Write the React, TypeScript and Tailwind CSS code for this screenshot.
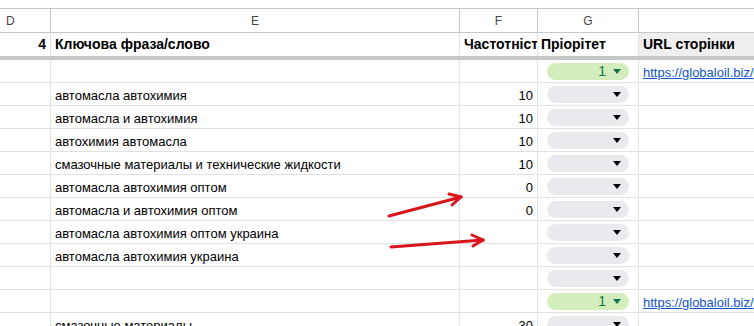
import React from "react";

type Row = { e?: string; f?: string; g?: "green" | "gray"; h?: string };

const rows: Row[] = [
  { g: "green", h: "https://globaloil.biz/" },
  { e: "автомасла автохимия", f: "10", g: "gray" },
  { e: "автомасла и автохимия", f: "10", g: "gray" },
  { e: "автохимия автомасла", f: "10", g: "gray" },
  { e: "смазочные материалы и технические жидкости", f: "10", g: "gray" },
  { e: "автомасла автохимия оптом", f: "0", g: "gray" },
  { e: "автомасла и автохимия оптом", f: "0", g: "gray" },
  { e: "автомасла автохимия оптом украина", g: "gray" },
  { e: "автомасла автохимия украина", g: "gray" },
  { g: "gray" },
  { g: "green", h: "https://globaloil.biz/" },
  { e: "смазочные материалы", f: "30", g: "gray" },
];

const cols = "grid grid-cols-[51px_409px_78px_101px_200px]";

function Chip({ kind }: { kind: "green" | "gray" }) {
  if (kind === "green") {
    return (
      <div className="ml-[9px] flex h-[17px] w-[82px] items-center justify-end rounded-[9px] bg-[#d4edbc] pr-[8px]">
        <span className="mr-[7px] text-[14px] leading-none text-[#11734b]">1</span>
        <svg width="8" height="5" viewBox="0 0 8 5">
          <path d="M0 0 L8 0 L4 5 Z" fill="#11734b" />
        </svg>
      </div>
    );
  }
  return (
    <div className="ml-[9px] flex h-[17px] w-[82px] items-center justify-end rounded-[9px] bg-[#e8eaed] pr-[8px]">
      <svg width="8" height="5" viewBox="0 0 8 5">
        <path d="M0 0 L8 0 L4 5 Z" fill="#000" />
      </svg>
    </div>
  );
}

export default function App() {
  return (
    <div
      className="relative h-[326px] w-[754px] overflow-hidden bg-white text-black"
      style={{ fontFamily: '"Liberation Sans", Arial, sans-serif' }}
    >
      <div className="h-[8px]" />
      {/* column letters */}
      <div className={`${cols} h-[25px] border-y border-[#c7c7c7] text-[12px] text-[#444746]`}>
        <div className="flex items-center border-r border-[#c7c7c7] pl-[6px]">D</div>
        <div className="flex items-center justify-center border-r border-[#c7c7c7]">E</div>
        <div className="flex items-center justify-center border-r border-[#c7c7c7]">F</div>
        <div className="flex items-center justify-center border-r border-[#c7c7c7]">G</div>
        <div />
      </div>
      {/* header row 4 */}
      <div className={`${cols} h-[23px] text-[14px] font-bold`}>
        <div className="flex items-end justify-end border-r border-[#e1e1e1] pb-[1px] pr-[4px]">4</div>
        <div className="flex items-end border-r border-[#e1e1e1] pb-[1px] pl-[4px]">Ключова фраза/слово</div>
        <div className="flex items-end overflow-hidden whitespace-nowrap border-r border-[#e1e1e1] pb-[1px] pl-[4px]">Частотність</div>
        <div className="flex items-end border-r border-[#e1e1e1] pb-[1px] pl-[3px]">Пріорітет</div>
        <div className="flex items-end whitespace-nowrap bg-[#efefef] pb-[1px] pl-[4px]">URL сторінки</div>
      </div>
      <div className="h-[4px] bg-[#c4c7c5]" />
      {rows.map((r, i) => (
        <div key={i} className={`${cols} h-[23px] border-b border-[#e1e1e1] text-[13px]`}>
          <div className="border-r border-[#e1e1e1]" />
          <div className="flex items-end whitespace-nowrap border-r border-[#e1e1e1] pb-0 pl-[4px]">{r.e}</div>
          <div className="flex items-end justify-end border-r border-[#e1e1e1] pb-0 pr-[4px]">{r.f}</div>
          <div className="flex items-center border-r border-[#e1e1e1]">
            {r.g && <Chip kind={r.g} />}
          </div>
          <div className="flex items-end overflow-hidden whitespace-nowrap pb-0 pl-[4px]">
            {r.h && <span className="text-[#1155cc] underline">{r.h}</span>}
          </div>
        </div>
      ))}
      <svg className="pointer-events-none absolute left-0 top-0" width="754" height="326">
        <g stroke="#d9141c" strokeWidth="3" strokeLinecap="round" fill="none">
          <line x1="389" y1="216" x2="461" y2="197" />
          <line x1="461" y1="197" x2="449" y2="194" />
          <line x1="461" y1="197" x2="452" y2="205" />
          <line x1="391" y1="247" x2="483" y2="240" />
          <line x1="483" y1="240" x2="472" y2="235" />
          <line x1="483" y1="240" x2="473" y2="246" />
        </g>
      </svg>
    </div>
  );
}
